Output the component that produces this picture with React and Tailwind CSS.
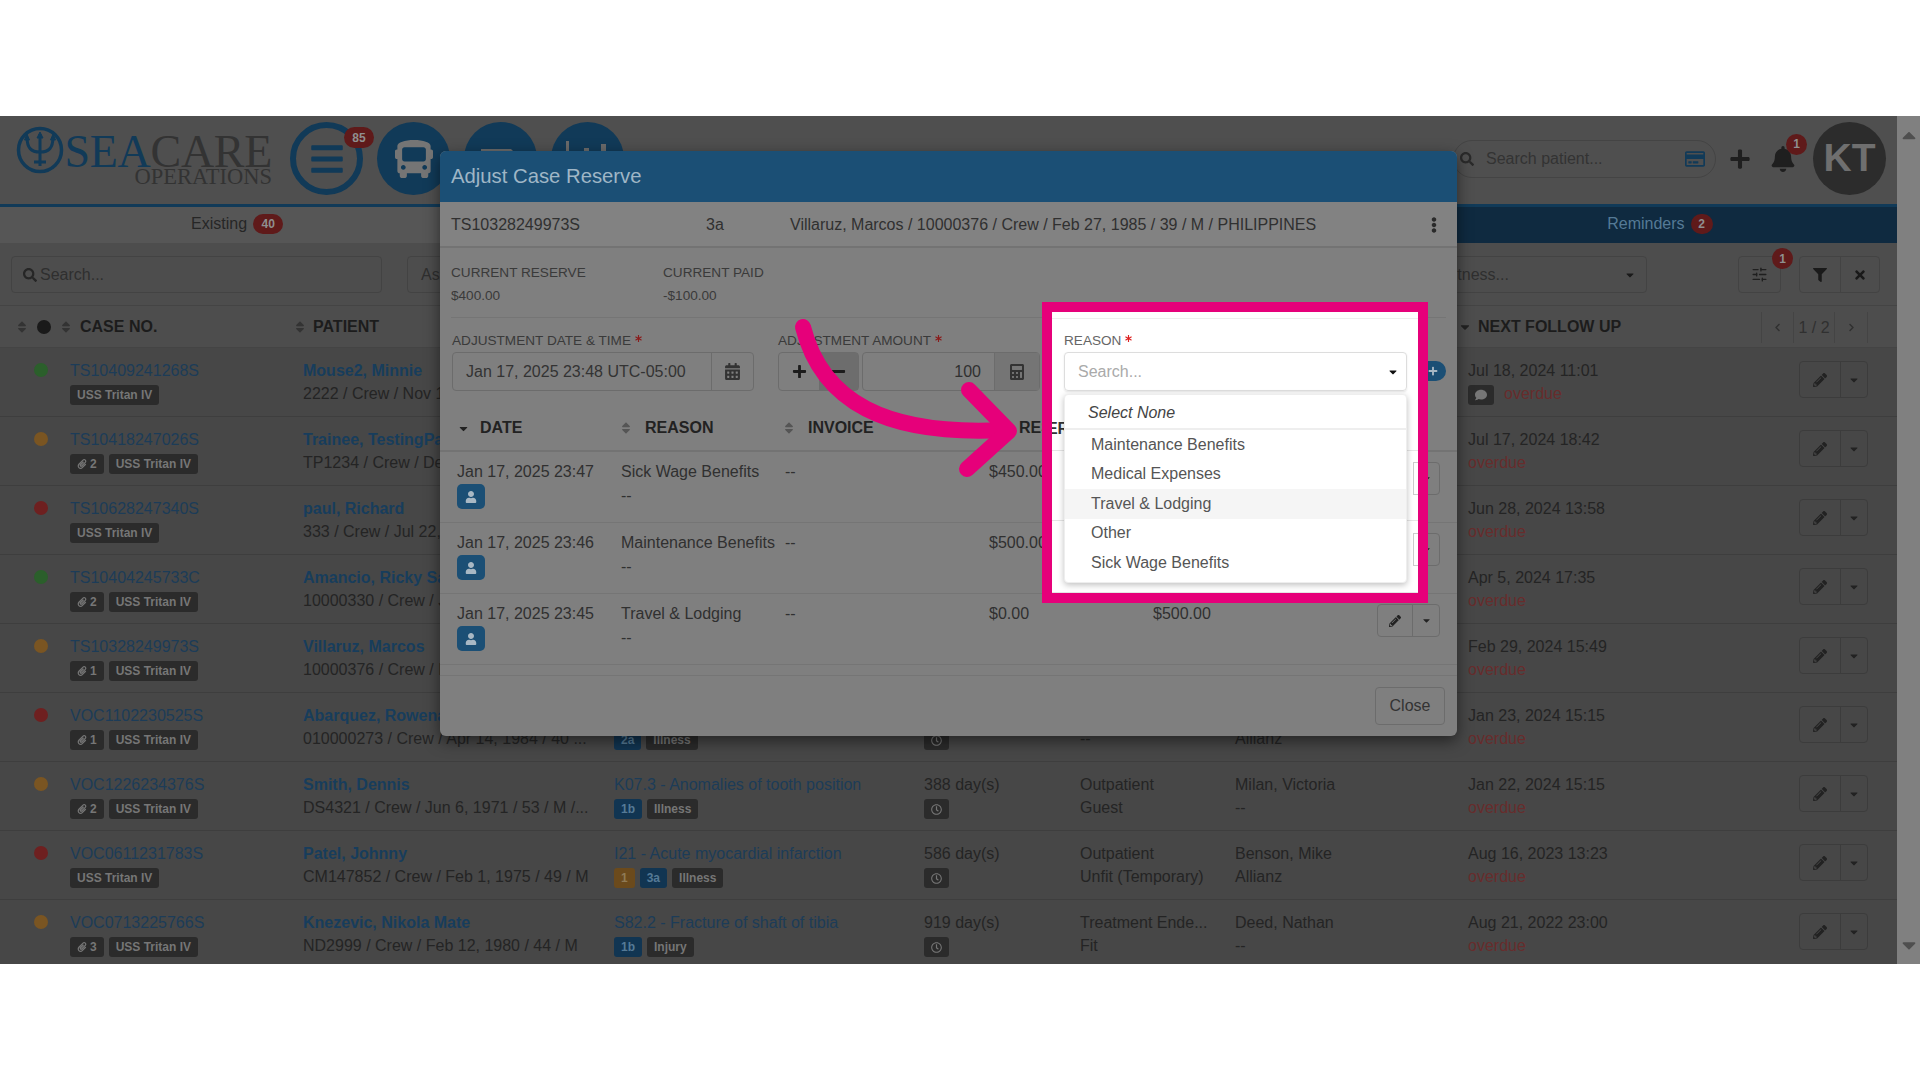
import React from "react";
import {
  FaAsterisk, FaBars, FaBell, FaBus, FaCalculator, FaCalendarAlt, FaCaretDown, FaCaretUp, FaChevronLeft,
  FaChevronRight, FaComment, FaRegCreditCard, FaEllipsisV, FaFilter, FaMinus, FaPaperclip, FaPencilAlt,
  FaPlus, FaRegClock, FaSearch, FaSort, FaTimes, FaUser,
} from "react-icons/fa";
import { SlidersHorizontal } from "lucide-react";

const ROWS = [
  { dot: "bg-[#2b5f2b]", no: "TS10409241268S", name: "Mouse2, Minnie", info: "2222 / Crew / Nov 1", next: "Jul 18, 2024 11:01", comment: true },
  { dot: "bg-[#7a5522]", no: "TS10418247026S", clips: 2, name: "Trainee, TestingPatient", info: "TP1234 / Crew / Dec", next: "Jul 17, 2024 18:42" },
  { dot: "bg-[#6e2020]", no: "TS10628247340S", name: "paul, Richard", info: "333 / Crew / Jul 22, 1980", next: "Jun 28, 2024 13:58" },
  { dot: "bg-[#2b5f2b]", no: "TS10404245733C", clips: 2, name: "Amancio, Ricky Santos", info: "10000330 / Crew / Jan", next: "Apr 5, 2024 17:35" },
  { dot: "bg-[#7a5522]", no: "TS10328249973S", clips: 1, name: "Villaruz, Marcos", info: "10000376 / Crew / Feb", next: "Feb 29, 2024 15:49" },
  {
    dot: "bg-[#6e2020]", no: "VOC1102230525S", clips: 1, name: "Abarquez, Rowena", info: "010000273 / Crew / Apr 14, 1984 / 40 ...",
    tags: ["2a"], kind: "Illness", a: "", b: "--", c: "", d: "Allianz", next: "Jan 23, 2024 15:15",
  },
  {
    dot: "bg-[#7a5522]", no: "VOC1226234376S", clips: 2, name: "Smith, Dennis", info: "DS4321 / Crew / Jun 6, 1971 / 53 / M /...",
    dx: "K07.3 - Anomalies of tooth position", tags: ["1b"], kind: "Illness", days: "388 day(s)", a: "Outpatient", b: "Guest", c: "Milan, Victoria", d: "--", next: "Jan 22, 2024 15:15",
  },
  {
    dot: "bg-[#6e2020]", no: "VOC0611231783S", name: "Patel, Johnny", info: "CM147852 / Crew / Feb 1, 1975 / 49 / M",
    dx: "I21 - Acute myocardial infarction", amber: "1", tags: ["3a"], kind: "Illness", days: "586 day(s)", a: "Outpatient", b: "Unfit (Temporary)", c: "Benson, Mike", d: "Allianz", next: "Aug 16, 2023 13:23",
  },
  {
    dot: "bg-[#7a5522]", no: "VOC0713225766S", clips: 3, name: "Knezevic, Nikola Mate", info: "ND2999 / Crew / Feb 12, 1980 / 44 / M",
    dx: "S82.2 - Fracture of shaft of tibia", tags: ["1b"], kind: "Injury", days: "919 day(s)", a: "Treatment Ende...", b: "Fit", c: "Deed, Nathan", d: "--", next: "Aug 21, 2022 23:00",
  },
];

const ADJUSTMENTS = [
  { date: "Jan 17, 2025 23:47", reason: "Sick Wage Benefits", amount: "$450.00", reserve: "" },
  { date: "Jan 17, 2025 23:46", reason: "Maintenance Benefits", amount: "$500.00", reserve: "" },
  { date: "Jan 17, 2025 23:45", reason: "Travel & Lodging", amount: "$0.00", reserve: "$500.00" },
];

const REASONS = ["Maintenance Benefits", "Medical Expenses", "Travel & Lodging", "Other", "Sick Wage Benefits"];

function Tag({ children, className = "bg-[#2b2b2b] text-[#767676]" }) {
  return (
    <span className={`inline-flex h-5 items-center gap-[3px] rounded-[3px] px-[7px] text-[12px] font-bold leading-none ${className}`}>
      {children}
    </span>
  );
}

function Trident() {
  return (
    <svg width="48" height="48" viewBox="0 0 48 48" fill="none" stroke="#113a58" className="shrink-0">
      <circle cx="24" cy="24" r="21.5" strokeWidth="3.5" />
      <path d="M24 8v32M18 36h12" strokeWidth="3" />
      <path d="M24 6l3 6h-6z" fill="#113a58" strokeWidth="1" />
      <path d="M11 11c0 11 4 15 13 15s13-4 13-15" strokeWidth="3" />
      <path d="M11 8l2.5 6h-5zM37 8l2.5 6h-5z" fill="#113a58" strokeWidth="1" />
    </svg>
  );
}

function Sort({ color = "text-[#333]" }) {
  return <FaSort size={14} className={`shrink-0 ${color}`} />;
}

function EditGroup() {
  return (
    <div className="flex h-[37px] w-[69px] rounded-[4px] border border-[#3c3c3c]">
      <div className="flex w-[41px] items-center justify-center border-r border-[#3c3c3c]">
        <FaPencilAlt size={14} className="text-[#222]" />
      </div>
      <div className="flex flex-1 items-center justify-center">
        <FaCaretDown size={12} className="text-[#222]" />
      </div>
    </div>
  );
}

function Header() {
  return (
    <div className="flex h-[91px] shrink-0 border-b-[3px] border-[#113a58] bg-[#4f4f4f]">
      <div className="flex w-[290px] shrink-0 pl-4 pt-[10px]">
        <Trident />
        <div className="ml-[4px] flex w-[204px] flex-col items-end font-['Liberation_Serif',serif]">
          <div className="mt-[7px] text-[46px] leading-[37px] tracking-[-0.3px]">
            <span className="text-[#113a58]">SEA</span>
            <span className="text-[#333]">CARE</span>
          </div>
          <div className="mt-[-3px] text-[22.5px] leading-[20px] text-[#333]">OPERATIONS</div>
        </div>
      </div>
      <div className="flex gap-[14px] pt-[6px]">
        <div className="relative flex h-[73px] w-[73px] items-center justify-center rounded-full border-[6px] border-[#113a58]">
          <FaBars size={36} className="text-[#113a58]" />
          <span className="absolute -right-[17px] -top-[1px] flex h-[21px] w-[30px] items-center justify-center rounded-full bg-[#5f1a1a] text-[12px] font-bold text-[#8f8f8f]">
            85
          </span>
        </div>
        <div className="flex h-[73px] w-[73px] items-center justify-center rounded-full bg-[#113a58]">
          <FaBus size={38} className="text-[#757575]" />
        </div>
        <div className="h-[73px] w-[73px] rounded-full bg-[#113a58]">
          <svg width="73" height="73" viewBox="0 0 73 73" fill="#6a6a6a">
            <path d="M17 27h30l6 6v12H17z" />
          </svg>
        </div>
        <div className="h-[73px] w-[73px] rounded-full bg-[#113a58]">
          <svg width="73" height="73" viewBox="0 0 73 73" fill="#6a6a6a">
            <path d="M15 19h3v30h-3zM33 26h5v23h-5zM50 22h5v27h-5z" />
          </svg>
        </div>
      </div>
      <div className="ml-auto flex h-[79px] items-center pr-[11px] pt-[6px]">
        <div className="flex h-[38px] w-[263px] items-center rounded-full border border-[#444] pl-[5px] pr-[10px] text-[16px] text-[#2a2a2a]">
          <FaSearch size={14} className="mr-[12px] ml-[1px] text-[#2a2a2a]" />
          <span className="text-[#333]">Search patient...</span>
          <FaRegCreditCard size={20} className="ml-auto text-[#113a58]" />
        </div>
        <FaPlus size={22} className="ml-[13px] text-[#1f1f1f]" />
        <div className="relative ml-[19px] mr-[17px]">
          <FaBell size={26} className="text-[#1f1f1f]" />
          <span className="absolute -right-[11px] -top-[12px] flex h-[21px] w-[21px] items-center justify-center rounded-full bg-[#5f1a1a] text-[12px] font-bold text-[#8f8f8f]">
            1
          </span>
        </div>
        <div className="flex h-[73px] w-[73px] items-center justify-center rounded-full bg-[#2c2c2c] text-[39px] font-bold text-[#6f6f6f]">
          KT
        </div>
      </div>
    </div>
  );
}

function Tabs() {
  const names = [["Existing", "40"], ["", ""], ["", ""], ["Reminders", "2"]];
  return (
    <div className="grid h-[36px] shrink-0 grid-cols-4 bg-[#565656] text-[16px]">
      {names.map(([name, count], i) => (
        <div key={i} className={`flex items-center justify-center gap-[6px] pb-[3px] ${i === 3 ? "bg-[#0f2a40] text-[#557a96]" : "text-[#262626]"}`}>
          {name}
          {count && (
            <span className={`flex h-5 items-center justify-center rounded-full bg-[#5f1a1a] text-[12px] font-bold text-[#8f8f8f] ${i === 3 ? "w-[22px]" : "w-[30px]"}`}>
              {count}
            </span>
          )}
        </div>
      ))}
    </div>
  );
}

function Filters() {
  return (
    <div className="flex h-[63px] shrink-0 items-start border-b border-[#444] bg-[#4d4d4d] pt-[13px] text-[16px] text-[#2f2f2f]">
      <div className="ml-[11px] flex h-[37px] w-[371px] items-center rounded-[4px] border border-[#434343] px-[11px]">
        <FaSearch size={14} className="mr-[3px] text-[#262626]" />
        Search...
      </div>
      <div className="ml-[25px] flex h-[37px] w-[640px] items-center rounded-[4px] border border-[#434343] px-[13px]">Assigned to...</div>
      <div className="ml-[383px] flex h-[37px] w-[217px] items-center rounded-[4px] border border-[#434343] pl-[13px] pr-[10px]">
        Fitness...
        <FaCaretDown size={12} className="ml-auto text-[#1a1a1a]" />
      </div>
      <div className="relative ml-[91px] flex h-[37px] w-[43px] items-center justify-center rounded-[4px] border border-[#434343]">
        <SlidersHorizontal size={17} strokeWidth={1.8} className="text-[#1f1f1f]" />
        <span className="absolute -right-[13px] -top-[9px] flex h-[21px] w-[21px] items-center justify-center rounded-full bg-[#5f1a1a] text-[12px] font-bold text-[#8f8f8f]">
          1
        </span>
      </div>
      <div className="ml-[18px] flex h-[37px] w-[81px] rounded-[4px] border border-[#434343]">
        <div className="flex w-[41px] items-center justify-center border-r border-[#434343]">
          <FaFilter size={14} className="text-[#1a1a1a]" />
        </div>
        <div className="flex flex-1 items-center justify-center">
          <FaTimes size={14} className="text-[#1a1a1a]" />
        </div>
      </div>
    </div>
  );
}

const GRID = "grid grid-cols-[70px_233px_311px_310px_156px_155px_233px_331px_1fr]";

function TableHead() {
  return (
    <div className={`${GRID} h-[42px] shrink-0 border-b border-[#444] bg-[#4d4d4d] pt-[1px] text-[16px] font-bold text-[#1c1c1c]`}>
      <div className="flex items-center pl-[15px] gap-[8px]">
        <Sort />
        <span className="h-[14px] w-[14px] shrink-0 rounded-full bg-[#1a1a1a]" />
        <Sort />
      </div>
      <div className="flex items-center pl-[10px]">CASE NO.</div>
      <div className="flex items-center">
        <span className="-ml-[10px] mr-[6px]"><Sort /></span>
        PATIENT
      </div>
      <div className="col-span-4" />
      <div className="flex items-center">
        <span className="-ml-[10px] mr-[6px]"><FaCaretDown size={14} className="text-[#222]" /></span>
        NEXT FOLLOW UP
      </div>
      <div className="relative">
        <div className="absolute right-[29px] top-[5px] flex h-[31px] items-stretch border-x border-[#444] font-normal text-[#303030]">
          <div className="flex w-[32px] items-center justify-center border-r border-[#444]"><FaChevronLeft size={9} /></div>
          <div className="flex w-[41px] items-center justify-center border-r border-[#444]">1 / 2</div>
          <div className="flex w-[32px] items-center justify-center"><FaChevronRight size={9} /></div>
        </div>
      </div>
    </div>
  );
}

function TableRow({ row }) {
  return (
    <div className={`${GRID} h-[69px] shrink-0 border-b border-[#3e3e3e] bg-[#474747] pt-[11px] text-[16px] leading-[23px] text-[#242424]`}>
      <div className="flex justify-end pr-[22px] pt-[4px]">
        <span className={`h-[14px] w-[14px] rounded-full ${row.dot}`} />
      </div>
      <div>
        <div className="text-[#1c3c58]">{row.no}</div>
        <div className="mt-[3px] flex gap-[5px]">
          {row.clips && (
            <Tag>
              <FaPaperclip size={10} />
              {row.clips}
            </Tag>
          )}
          <Tag>USS Tritan IV</Tag>
        </div>
      </div>
      <div>
        <div className="font-bold text-[#173d5c]">{row.name}</div>
        <div>{row.info}</div>
      </div>
      <div>
        <div className="text-[#1c3c58]">{row.dx || "\u00a0"}</div>
        <div className="mt-[3px] flex gap-[5px]">
          {row.amber && <Tag className="bg-[#6b4a1c] text-[#8f7a55]">{row.amber}</Tag>}
          {row.tags?.map((t) => <Tag key={t} className="bg-[#113552] text-[#557a96]">{t}</Tag>)}
          {row.kind && <Tag>{row.kind}</Tag>}
        </div>
      </div>
      <div>
        <div>{row.days || "\u00a0"}</div>
        {row.kind && (
          <div className="mt-[3px] flex">
            <span className="flex h-5 w-[25px] items-center justify-center rounded-[3px] bg-[#2b2b2b] text-[#767676]">
              <FaRegClock size={11} />
            </span>
          </div>
        )}
      </div>
      <div>
        <div>{row.a || "\u00a0"}</div>
        <div>{row.b}</div>
      </div>
      <div>
        <div>{row.c || "\u00a0"}</div>
        <div>{row.d}</div>
      </div>
      <div>
        <div>{row.next}</div>
        <div className="flex items-center gap-[10px]">
          {row.comment && (
            <span className="mt-[3px] flex h-5 w-[26px] items-center justify-center rounded-[3px] bg-[#2b2b2b] text-[#767676]">
              <FaComment size={12} />
            </span>
          )}
          <span className="text-[#682c2c]">overdue</span>
        </div>
      </div>
      <div className="pt-[2px]">
        <EditGroup />
      </div>
    </div>
  );
}

function Star() {
  return <FaAsterisk size={7} className="ml-[4px] mb-[6px] text-[#8a1c1c]" />;
}

function Modal() {
  return (
    <div className="absolute left-[440px] top-[35px] flex h-[585px] w-[1017px] flex-col overflow-hidden rounded-[6px] bg-[#7f7f7f] text-[16px] text-[#303030] shadow-[0_5px_15px_rgba(0,0,0,0.5)]">
      <div className="flex h-[51px] shrink-0 items-center bg-[#1b4f75] pl-[11px] text-[20.3px] text-[#9fb6c6]">Adjust Case Reserve</div>
      <div className="flex h-[46px] shrink-0 items-center border-b-2 border-[#737373] bg-[#828282] pl-[11px] pt-[2px]">
        <span className="w-[255px]">TS10328249973S</span>
        <span className="w-[84px]">3a</span>
        <span>Villaruz, Marcos / 10000376 / Crew / Feb 27, 1985 / 39 / M / PHILIPPINES</span>
        <FaEllipsisV size={16} className="ml-auto mr-[15px] text-[#2a2a2a]" />
      </div>
      <div className="mx-[11px] flex h-[70px] shrink-0 border-b border-[#757575] pt-[13px] text-[13.6px] leading-[23px] text-[#3a3a3a]">
        <div className="w-[212px]">
          <div>CURRENT RESERVE</div>
          <div>$400.00</div>
        </div>
        <div>
          <div>CURRENT PAID</div>
          <div>-$100.00</div>
        </div>
      </div>
      <div className="flex h-[87px] shrink-0 pl-3 pt-[12px]">
        <div className="w-[302px]">
          <div className="flex h-[22px] items-center text-[13.6px] text-[#3a3a3a]">
            ADJUSTMENT DATE &amp; TIME
            <Star />
          </div>
          <div className="flex h-[39px] rounded-[4px] border border-[#6c6c6c]">
            <div className="flex w-[259px] items-center border-r border-[#6c6c6c] pl-[13px] text-[#333]">Jan 17, 2025 23:48 UTC-05:00</div>
            <div className="flex flex-1 items-center justify-center">
              <FaCalendarAlt size={17} className="text-[#333]" />
            </div>
          </div>
        </div>
        <div className="ml-[24px] w-[262px]">
          <div className="flex h-[22px] items-center text-[13.6px] text-[#3a3a3a]">
            ADJUSTMENT AMOUNT
            <Star />
          </div>
          <div className="flex h-[39px] gap-[3px]">
            <div className="flex w-[81px] rounded-[4px] border border-[#6c6c6c]">
              <div className="flex w-[40px] items-center justify-center">
                <FaPlus size={15} className="text-[#1c1c1c]" />
              </div>
              <div className="flex flex-1 items-center justify-center bg-[#6d6d6d]">
                <FaMinus size={15} className="text-[#1c1c1c]" />
              </div>
            </div>
            <div className="flex flex-1 rounded-[4px] border border-[#6c6c6c]">
              <div className="flex flex-1 items-center justify-end border-r border-[#6c6c6c] pr-[13px]">100</div>
              <div className="flex w-[44px] items-center justify-center bg-[#757575]">
                <FaCalculator size={16} className="text-[#333]" />
              </div>
            </div>
          </div>
        </div>
        <div className="ml-auto mr-[11px] mt-[31px] flex h-5 w-[30px] items-center justify-end rounded-full bg-[#1b4f75] pr-[8px]">
          <FaPlus size={10} className="text-[#a8b8c4]" />
        </div>
      </div>
      <div className="flex h-[47px] shrink-0 items-center border-b-2 border-[#737373] pt-[1px] text-[16px] font-bold text-[#222]">
        <div className="flex w-[181px] items-center pl-[17px]">
          <FaCaretDown size={13} className="mr-[10px] text-[#222]" />
          DATE
        </div>
        <div className="flex w-[164px] items-center pl-[1px]">
          <span className="-ml-[3px]"><Sort color="text-[#555]" /></span>
          <span className="ml-[12px]">REASON</span>
        </div>
        <div className="flex w-[204px] items-center pl-[1px]">
          <span className="-ml-[4px]"><Sort color="text-[#555]" /></span>
          <span className="ml-[12px]">INVOICE</span>
        </div>
        <div className="flex items-center">
          <span className="ml-[4px]"><Sort color="text-[#555]" /></span>
          <span className="ml-[12px]">RESERVE</span>
        </div>
      </div>
      {ADJUSTMENTS.map((a) => (
        <div key={a.date} className="flex h-[71px] shrink-0 border-b border-[#757575] pt-[8px] leading-[24px]">
          <div className="w-[181px] pl-[17px]">
            <div>{a.date}</div>
            <div className="flex h-[25px] w-[28px] items-center justify-center rounded-[5px] bg-[#1b4f75]">
              <FaUser size={12} className="text-[#a8b8c4]" />
            </div>
          </div>
          <div className="w-[164px]">
            <div>{a.reason}</div>
            <div>--</div>
          </div>
          <div className="w-[204px]">--</div>
          <div className="w-[164px]">{a.amount}</div>
          <div className="w-[224px]">{a.reserve}</div>
          <div className="pt-[2px]">
            <div className="flex h-[33px] w-[63px] rounded-[4px] border border-[#6c6c6c]">
              <div className="flex w-[35px] items-center justify-center border-r border-[#6c6c6c]">
                <FaPencilAlt size={12} className="text-[#222]" />
              </div>
              <div className="flex flex-1 items-center justify-center">
                <FaCaretDown size={11} className="text-[#222]" />
              </div>
            </div>
          </div>
        </div>
      ))}
      <div className="mt-[10px] flex flex-1 items-start justify-end border-t border-[#757575] pr-[12px] pt-[11px]">
        <div className="flex h-[38px] w-[70px] items-center justify-center rounded-[4px] border border-[#6c6c6c] text-[#333]">Close</div>
      </div>
    </div>
  );
}

// Pink callout that shows the reason select undimmed
function Callout() {
  return (
    <div className="absolute left-[1042px] top-[186px] h-[301px] w-[386px] overflow-hidden border-[10px] border-[#e6007a] bg-white text-[16px] text-[#555]">
      <div className="absolute left-[-38px] top-[105px] text-[#333] font-bold">RESERVE</div>
      <div className="absolute left-[-63px] top-[147px] text-[#555]">$450.00</div>
      <div className="absolute left-[-63px] top-[218px] text-[#555]">$500.00</div>
      <div className="absolute inset-x-0 top-[138px] border-t border-[#e5e5e5]" />
      <div className="absolute inset-x-0 top-[208px] border-t border-[#e5e5e5]" />
      <div className="absolute inset-x-0 top-[280px] border-t border-[#e5e5e5]" />
      <div className="absolute right-0 top-[150px] h-[33px] w-[5px] border-y border-l border-[#ccc]" />
      <div className="absolute right-0 top-[221px] h-[33px] w-[5px] border-y border-l border-[#ccc]" />
      <div className="h-[7px] border-b border-[#eee]" />
      <div className="mt-[11px] flex h-[22px] items-center pl-3 text-[13.6px] text-[#666]">
        REASON
        <FaAsterisk size={7} className="ml-[4px] mb-[6px] text-[#d22]" />
      </div>
      <div className="ml-3 flex h-[39px] w-[343px] items-center rounded-[4px] border border-[#ddd] pl-[13px] pr-[7px] shadow-[0_1px_2px_rgba(0,0,0,0.1)] text-[#aaa]">
        Search...
        <FaCaretDown size={12} className="ml-auto text-[#111]" />
      </div>
      <div className="relative ml-3 mt-[3px] h-[189px] w-[343px] rounded-[4px] border border-[#eee] bg-white shadow-[0_2px_6px_rgba(0,0,0,0.25)]">
        <div className="flex h-[35px] items-center border-b-2 border-[#eee] pl-[23px] pt-[2px] italic text-[#444]">Select None</div>
        {REASONS.map((r) => (
          <div key={r} className={`flex h-[29.5px] items-center pl-[26px] ${r === "Travel & Lodging" ? "bg-[#f5f5f5]" : ""}`}>{r}</div>
        ))}
      </div>
    </div>
  );
}

function Arrow() {
  return (
    <svg className="absolute left-0 top-0 pointer-events-none" width="1920" height="848" viewBox="0 116 1920 848" fill="none" stroke="#e6007a" strokeWidth="16" strokeLinecap="round" strokeLinejoin="round">
      <path d="M803 327C822 402 886 436 1004 430" />
      <path d="M969 390L1009 431L967 469" />
    </svg>
  );
}

export default function App() {
  return (
    <div className="flex h-[1080px] w-[1920px] flex-col overflow-hidden bg-white font-['Liberation_Sans',Arial,sans-serif]">
      <div className="h-[116px] shrink-0" />
      <div className="relative flex h-[848px] shrink-0">
        <div className="flex flex-1 flex-col overflow-hidden bg-[#474747]">
          <Header />
          <Tabs />
          <Filters />
          <TableHead />
          {ROWS.map((r) => <TableRow key={r.no} row={r} />)}
        </div>
        <div className="flex w-[23px] flex-col items-center justify-between bg-[#808080] py-[8px] text-[#4f4f4f]">
          <FaCaretUp size={22} />
          <FaCaretDown size={22} />
        </div>
        <Modal />
        <Arrow />
        <Callout />
      </div>
    </div>
  );
}
